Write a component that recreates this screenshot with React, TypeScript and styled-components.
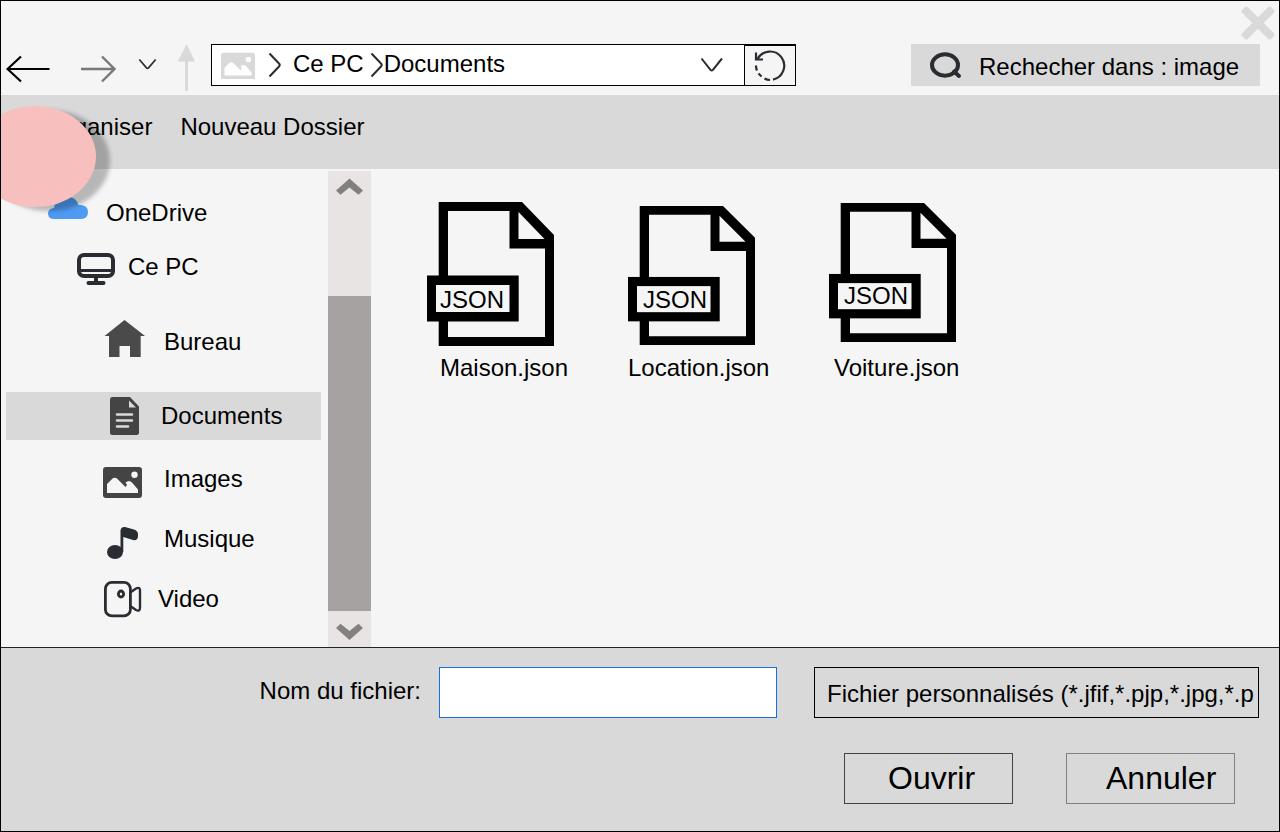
import React from "react";
import styled, { createGlobalStyle } from "styled-components";

const color = {
  surface: "#f5f5f5",
  bar: "#d9d9d9",
  ink: "#292d32",
  glyph: "#444444",
  track: "#e8e4e3",
  thumb: "#a6a2a1",
};

const GlobalStyle = createGlobalStyle`
  *, *::before, *::after { box-sizing: border-box; }
  body { margin: 0; background: ${color.surface}; }
  body, button, input, select {
    font-family: "Liberation Sans", Arial, sans-serif;
    font-size: 24px;
    color: #000;
  }
`;

const Window = styled.div`
  position: relative;
  display: flex;
  flex-direction: column;
  min-height: 100vh;
  overflow: hidden;
  border: 1px solid #000;
  background: ${color.surface};
`;

const PlainButton = styled.button`
  padding: 0;
  border: 0;
  background: none;
  cursor: pointer;
  svg { display: block; }
`;

const TitleRow = styled.div`
  display: flex;
  justify-content: flex-end;
  height: 43px;
  padding: 5px 4px 0 0;
`;

const CloseButton = styled(PlainButton)`
  height: 34px;
`;

const NavRow = styled.header`
  display: flex;
  align-items: flex-start;
  height: 51px;
  padding: 0 19px 0 5px;
`;

const NavButton = styled(PlainButton)<{ $width: number }>`
  flex: none;
  width: ${(p) => p.$width}px;
  height: 48px;
`;

const AddressBar = styled.div`
  display: flex;
  flex: 0 1 585px;
  height: 42px;
  border: 1px solid #000;
  background: #fff;
`;

const Breadcrumb = styled.nav`
  display: flex;
  flex: 1;
  align-items: center;
  padding-left: 9px;
  white-space: nowrap;
  svg { flex: none; }
`;

const RootIcon = styled.svg`
  margin-right: 13px;
`;

const Crumb = styled.a<{ $before?: number; $after?: number }>`
  margin-left: ${(p) => p.$before ?? 0}px;
  margin-right: ${(p) => p.$after ?? 0}px;
  padding-bottom: 2px;
  line-height: 38px;
  color: inherit;
  text-decoration: none;
`;

const HistoryButton = styled(PlainButton)`
  display: flex;
  align-items: center;
  justify-content: center;
  width: 64px;
`;

const RefreshButton = styled(PlainButton)`
  display: flex;
  align-items: center;
  justify-content: center;
  width: 51px;
  border-top: 1px solid #000;
  border-left: 1px solid #000;
  background: ${color.surface};
`;

const SearchBox = styled.label`
  display: flex;
  flex: 0 1 349px;
  align-items: center;
  gap: 17px;
  min-width: 0;
  height: 42px;
  margin-left: auto;
  padding-left: 18px;
  background: ${color.bar};
  svg { flex: none; }
`;

const SearchInput = styled.input`
  flex: 1;
  width: 100%;
  min-width: 0;
  padding: 4px 0 0;
  border: 0;
  outline: 0;
  background: none;
  &::placeholder { color: #000; opacity: 1; }
`;

const Toolbar = styled.div`
  display: flex;
  gap: 28px;
  height: 74px;
  padding: 18px 46px 0;
  align-items: flex-start;
  background: ${color.bar};
`;

const ToolbarButton = styled(PlainButton)`
  line-height: 28px;
  white-space: nowrap;
`;

const Body = styled.div`
  display: flex;
  flex: 1;
`;

const Sidebar = styled.nav`
  flex: none;
  width: 327px;
  padding: 20px 7px 24px 5px;
`;

const Place = styled(PlainButton)<{ $indent: number; $gap: number; $above: number; $active?: boolean }>`
  display: flex;
  align-items: center;
  gap: ${(p) => p.$gap}px;
  width: 100%;
  height: 48px;
  margin-top: ${(p) => p.$above}px;
  padding-left: ${(p) => p.$indent}px;
  background: ${(p) => (p.$active ? color.bar : "none")};
`;

const Scrollbar = styled.div`
  display: flex;
  flex: none;
  flex-direction: column;
  width: 43px;
  margin-top: 2px;
  background: ${color.track};
`;

const ScrollButton = styled(PlainButton)`
  display: flex;
  align-items: center;
  justify-content: center;
  flex: none;
  height: 36px;
`;

const ScrollSpace = styled.div`
  flex: 89;
`;

const ScrollThumb = styled.div`
  flex: 315;
  background: ${color.thumb};
`;

const Files = styled.main`
  display: flex;
  flex: 1;
  flex-wrap: wrap;
  align-content: flex-start;
  gap: 24px 57px;
  padding: 33px 20px 20px 55px;
`;

const File = styled(PlainButton)`
  width: 144px;
  text-align: left;
`;

const FileName = styled.span<{ $inset: number }>`
  display: block;
  margin-top: 6px;
  padding-left: ${(p) => p.$inset}px;
  line-height: 28px;
  white-space: nowrap;
`;

const Footer = styled.footer`
  border-top: 1px solid #222;
  padding: 19px 20px 27px;
  background: ${color.bar};
`;

const FieldRow = styled.div`
  display: flex;
  justify-content: flex-end;
  align-items: flex-start;
`;

const FieldLabel = styled.label`
  margin-right: 18px;
  line-height: 48px;
  white-space: nowrap;
`;

const NameInput = styled.input`
  flex: 0 1 338px;
  min-width: 0;
  height: 51px;
  margin-right: 37px;
  padding: 0 12px;
  border: 1px solid #1670d8;
  border-radius: 0;
  outline: 0;
  background: #fff;
`;

const TypeSelect = styled.select`
  flex: 0 1 445px;
  min-width: 0;
  height: 51px;
  padding: 2px 0 0 12px;
  appearance: none;
  border: 1px solid #000;
  border-radius: 0;
  outline: 0;
  background: none;
`;

const Actions = styled.div`
  display: flex;
  justify-content: flex-end;
  gap: 53px;
  margin-top: 35px;
  padding-right: 24px;
`;

const ActionButton = styled(PlainButton)<{ $inset: number; $line: string }>`
  width: 169px;
  height: 51px;
  padding: 0 0 2px ${(p) => p.$inset}px;
  border: 1px solid ${(p) => p.$line};
  font-size: 32px;
  line-height: 46px;
  text-align: left;
`;

const Bubble = styled.div`
  position: absolute;
  top: 105px;
  left: -27px;
  width: 122px;
  height: 101px;
  border-radius: 50%;
  background: #f8bfbf;
  box-shadow: 14px 4px 4px rgba(0, 0, 0, 0.25);
  pointer-events: none;
`;

const PictureShape = () => (
  <path
    fillRule="evenodd"
    d="M3 0H36Q39 0 39 3V28Q39 31 36 31H3Q0 31 0 28V3Q0 0 3 0ZM4 26H35V22.500L29 15.500Q26 12.500 22.500 15.500L24 18L22.500 20L14 11.500Q12 10 9.500 11.500L4 17ZM31.500 4.500A3.200 3.200 0 1 0 31.500 10.900A3.200 3.200 0 1 0 31.500 4.500Z"
  />
);

const CrumbChevron = () => (
  <svg width="14" height="26" viewBox="0 0 14 26" fill="none" stroke={color.ink} strokeWidth="2">
    <path d="M1.500 1.500L11 11.500Q12.500 13 11 14.500L1.500 24.500" />
  </svg>
);

const CellIcon = ({ children }: { children: React.ReactNode }) => (
  <svg width="42" height="48" viewBox="0 0 42 48" fill="none">
    {children}
  </svg>
);

const CloudIcon = () => (
  <CellIcon>
    <path
      fill="#4f9bf2"
      d="M8.500 30Q2 30 2 24.500Q2 19.500 8 19Q8 14 15 13Q18 8 22.500 8Q30 8 32.500 16H35Q42 16.500 42 23Q42 30 35 30Z"
    />
  </CellIcon>
);

const ComputerIcon = () => (
  <CellIcon>
    <g stroke={color.ink} strokeLinecap="round">
      <rect x="4" y="12" width="34" height="21" rx="5" strokeWidth="4" />
      <path d="M4 27.500H38" strokeWidth="3" />
      <path d="M21 34V39" strokeWidth="4" strokeLinecap="butt" />
      <path d="M13.500 40H28.500" strokeWidth="4" />
    </g>
  </CellIcon>
);

const HomeIcon = () => (
  <CellIcon>
    <path fill="#4a4a4a" d="M21.500 2L42 18H37.700V39H27V28H16.500V39H6V18H1.500Z" />
  </CellIcon>
);

const DocumentIcon = () => (
  <CellIcon>
    <path
      fill={color.glyph}
      fillRule="evenodd"
      d="M9 5H27L36 14.500V40.500Q36 43 33.500 43H9.500Q7 43 7 40.500V7.500Q7 5 9 5ZM26 8.500V15.500H33Z"
    />
    <path d="M14 22.500H29M14 28.500H29M14 34.500H25" stroke={color.bar} strokeWidth="2.600" strokeLinecap="round" />
  </CellIcon>
);

const ImagesIcon = () => (
  <CellIcon>
    <g transform="translate(0 12)" fill={color.glyph}>
      <PictureShape />
    </g>
  </CellIcon>
);

const MusicIcon = () => (
  <CellIcon>
    <g fill={color.ink}>
      <ellipse cx="12" cy="37" rx="8" ry="7" />
      <path d="M17.500 37V15.500Q18 11.500 22 12L31 14.500Q35 16 35 19V21.500Q34.500 26 30 25L20.300 22V37Z" />
    </g>
  </CellIcon>
);

const VideoIcon = () => (
  <CellIcon>
    <g stroke={color.ink} strokeWidth="2.800">
      <rect x="2.400" y="7.400" width="25" height="33.500" rx="6.500" />
      <ellipse cx="18" cy="19" rx="2.600" ry="3" />
      <path d="M28 17L33 13.500Q37 11.500 37 15.500V32.500Q37 37 33 35L28 31.500" strokeWidth="2.400" />
    </g>
  </CellIcon>
);

type JsonIconProps = { top: number; height: number; textX: number; textY: number };

// Sheet outline, folded corner and name badge, stretched between top and height.
const JsonIcon = ({ top, height, textX, textY }: JsonIconProps) => {
  const y = (v: number) => top + (v * height) / 144;
  return (
    <svg width="130" height="146" viewBox="0 0 130 146">
      <path
        fillRule="evenodd"
        d={`M12.700 ${y(0)}H96L128 ${y(33)}V${y(144)}H12.700Z
            M22 ${y(9)}V${y(135)}H119V${y(46.5)}H83.500V${y(9)}Z
            M92.500 ${y(10)}V${y(37)}H118.500Z`}
      />
      <rect x="1" y={y(73.5)} width="91.700" height={(46 * height) / 144} />
      <rect x="10" y={y(83)} width="73.500" height={(27 * height) / 144} fill={color.surface} />
      <text x={textX} y={textY} fontSize="24">
        JSON
      </text>
    </svg>
  );
};

const places = [
  { name: "OneDrive", Icon: CloudIcon, indent: 40, gap: 18, above: 0 },
  { name: "Ce PC", Icon: ComputerIcon, indent: 69, gap: 11, above: 6 },
  { name: "Bureau", Icon: HomeIcon, indent: 97, gap: 19, above: 27 },
  { name: "Documents", Icon: DocumentIcon, indent: 97, gap: 16, above: 26, active: true },
  { name: "Images", Icon: ImagesIcon, indent: 97, gap: 19, above: 15 },
  { name: "Musique", Icon: MusicIcon, indent: 97, gap: 19, above: 12 },
  { name: "Video", Icon: VideoIcon, indent: 97, gap: 13, above: 12 },
];

const files = [
  { name: "Maison.json", inset: 14, icon: { top: 0, height: 144, textX: 14, textY: 106 } },
  { name: "Location.json", inset: 1, icon: { top: 4, height: 139, textX: 16, textY: 106 } },
  { name: "Voiture.json", inset: 6, icon: { top: 1, height: 139, textX: 16, textY: 102 } },
];

export default function App() {
  return (
    <>
      <GlobalStyle />
      <Window>
        <TitleRow>
          <CloseButton aria-label="Fermer">
            <svg width="34" height="34" viewBox="0 0 34 34" fill={color.bar}>
              <rect x="-3.500" y="13" width="41" height="8" rx="2" transform="rotate(45 17 17)" />
              <rect x="-3.500" y="13" width="41" height="8" rx="2" transform="rotate(-45 17 17)" />
            </svg>
          </CloseButton>
        </TitleRow>

        <NavRow>
          <NavButton $width={75} aria-label="Précédent">
            <svg width="46" height="48" viewBox="0 0 46 48" fill="none" stroke="#000" strokeWidth="2.200">
              <path d="M1 25H43.500M15 12.500L1.500 25L15 37.500" />
            </svg>
          </NavButton>
          <NavButton $width={57} aria-label="Suivant">
            <svg width="36" height="48" viewBox="0 0 36 48" fill="none" stroke="#76787a" strokeWidth="2.400">
              <path d="M0 25H33M21 12.500L33.500 25L21 37.500" />
            </svg>
          </NavButton>
          <NavButton $width={39} aria-label="Emplacements récents">
            <svg width="19" height="48" viewBox="0 0 19 48" fill="none" stroke={color.ink} strokeWidth="1.700">
              <path d="M1.300 15.500L8.500 23.800Q9.500 24.800 10.500 23.800L17.700 15.500" />
            </svg>
          </NavButton>
          <NavButton $width={34} aria-label="Dossier parent">
            <svg width="19" height="48" viewBox="0 0 19 48" fill={color.bar}>
              <path d="M9.500 0L18.200 17.500H11V47H8V17.500H.800Z" />
            </svg>
          </NavButton>

          <AddressBar>
            <Breadcrumb aria-label="Chemin">
              <RootIcon width="34" height="27" viewBox="0 -1 39 31" fill={color.bar}>
                <PictureShape />
              </RootIcon>
              <CrumbChevron />
              <Crumb href="#ce-pc" $before={11} $after={6}>
                Ce PC
              </Crumb>
              <CrumbChevron />
              <Crumb href="#documents">Documents</Crumb>
            </Breadcrumb>
            <HistoryButton aria-label="Historique">
              <svg width="24" height="16" viewBox="0 0 24 16" fill="none" stroke={color.ink} strokeWidth="2">
                <path d="M1.500 1.500L10.500 12.800Q11.700 14.200 12.900 12.800L22 1.500" />
              </svg>
            </HistoryButton>
            <RefreshButton aria-label="Actualiser">
              <svg width="32" height="34" viewBox="0 0 32 34" fill="none" stroke={color.ink} strokeWidth="2.200">
                <path d="M19 30.600A14.200 14.200 0 1 0 3.500 10" />
                <path d="M2 3.500V10.500H9" />
                <path d="M2 16.500Q2 19.500 3 21.500M4.500 24.500L7.500 27.500M10.500 29.500Q13 31 16 31" />
              </svg>
            </RefreshButton>
          </AddressBar>

          <SearchBox>
            <svg width="33" height="30" viewBox="0 0 33 30" fill="none" stroke={color.ink} strokeWidth="4">
              <ellipse cx="16" cy="15" rx="13" ry="10.700" />
              <path d="M25 21.500L30 26" strokeLinecap="round" />
            </svg>
            <SearchInput aria-label="Rechercher" placeholder="Rechecher dans : image" />
          </SearchBox>
        </NavRow>

        <Toolbar>
          <ToolbarButton>Organiser</ToolbarButton>
          <ToolbarButton>Nouveau Dossier</ToolbarButton>
        </Toolbar>

        <Body>
          <Sidebar aria-label="Emplacements">
            {places.map(({ name, Icon, indent, gap, above, active }) => (
              <Place key={name} $indent={indent} $gap={gap} $above={above} $active={active}>
                <Icon />
                {name}
              </Place>
            ))}
          </Sidebar>
          <Scrollbar>
            <ScrollButton aria-label="Défiler vers le haut">
              <svg width="29" height="22" viewBox="0 0 29 22" fill="#82807f">
                <path d="M14.500 .500L28 12.500L23.500 16.800L14.500 9.500L5.500 16.800L1 12.500Z" />
              </svg>
            </ScrollButton>
            <ScrollSpace />
            <ScrollThumb />
            <ScrollButton aria-label="Défiler vers le bas">
              <svg width="29" height="22" viewBox="0 0 29 22" fill="#828080">
                <path d="M14.500 22L28 10L23.500 5.700L14.500 13L5.500 5.700L1 10Z" />
              </svg>
            </ScrollButton>
          </Scrollbar>
          <Files>
            {files.map(({ name, inset, icon }) => (
              <File key={name}>
                <JsonIcon {...icon} />
                <FileName $inset={inset}>{name}</FileName>
              </File>
            ))}
          </Files>
        </Body>

        <Footer>
          <FieldRow>
            <FieldLabel htmlFor="file-name">Nom du fichier:</FieldLabel>
            <NameInput id="file-name" type="text" />
            <TypeSelect aria-label="Type de fichier">
              <option>Fichier personnalisés (*.jfif,*.pjp,*.jpg,*.p</option>
            </TypeSelect>
          </FieldRow>
          <Actions>
            <ActionButton $inset={43} $line="#444">
              Ouvrir
            </ActionButton>
            <ActionButton $inset={39} $line="#808080">
              Annuler
            </ActionButton>
          </Actions>
        </Footer>

        <Bubble />
      </Window>
    </>
  );
}
